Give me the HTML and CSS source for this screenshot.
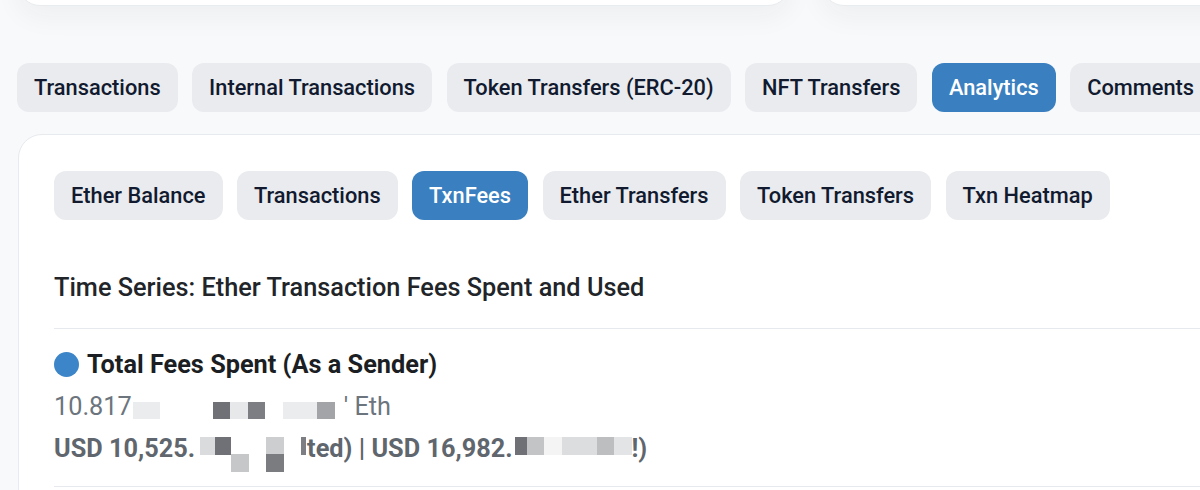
FILE: index.html
```html
<!DOCTYPE html>
<html lang="en">
<head>
<meta charset="utf-8">
<title>Address Analytics</title>
<link rel="stylesheet" href="styles.css">
</head>
<body>
<div class="page">
  <div class="top-cards">
    <div class="top-card"></div>
    <div class="top-card"></div>
  </div>

  <nav class="tabs">
    <a class="pill">Transactions</a>
    <a class="pill">Internal Transactions</a>
    <a class="pill">Token Transfers (ERC-20)</a>
    <a class="pill">NFT Transfers</a>
    <a class="pill active">Analytics</a>
    <a class="pill">Comments</a>
  </nav>

  <section class="card">
    <nav class="tabs">
      <a class="pill">Ether Balance</a>
      <a class="pill">Transactions</a>
      <a class="pill active">TxnFees</a>
      <a class="pill">Ether Transfers</a>
      <a class="pill">Token Transfers</a>
      <a class="pill">Txn Heatmap</a>
    </nav>

    <h2 class="heading">Time Series: Ether Transaction Fees Spent and Used</h2>

    <div class="stat">
      <div class="stat-title"><span class="dot"></span>Total Fees Spent (As a Sender)</div>
      <div class="stat-value">10.817<span class="m w1"></span><span class="m m-l w27"></span><span class="m w53"></span><span class="m m-d w17"></span><span class="m m-l2 w18"></span><span class="m m-d2 w17"></span><span class="m w18"></span><span class="m m-l w34"></span><span class="m m-g w18"></span><span class="m w9"></span>' Eth</div>
      <div class="stat-usd">USD 10,525.<span class="m w5"></span><span class="m m-f w15"></span><span class="m m-d w16"></span><span class="m2 m2-b w18"></span><span class="m w17"></span><span class="m2 m2-d w18"></span><span class="m w17"></span><span class="m m-d2 w5"></span><span class="m w1"></span>ted) | USD 16,982.<span class="m w2"></span><span class="m m-d w12"></span><span class="m m-c w17"></span><span class="m m-vl w18"></span><span class="m m-l3 w35"></span><span class="m m-c2 w17"></span><span class="m m-l4 w18"></span>!)</div>
    </div>
  </section>
</div>
</body>
</html>
```

FILE: styles.css
```css
html, body {
  margin: 0;
  padding: 0;
}

body {
  background: #f8f9fa;
  font-family: Roboto, "Liberation Sans", sans-serif;
  overflow: hidden;
  width: 1200px;
  height: 490px;
}

.page {
  width: 1576px;
  margin-left: 18px;
}

.top-cards {
  display: grid;
  grid-template-columns: 772px 772px;
  gap: 32px;
  margin-top: -45px;
}

.top-card {
  height: 49px;
  background: #ffffff;
  border: 1px solid #e9ecef;
  border-radius: 22px;
  box-shadow: 0 10px 28px rgba(30, 40, 60, 0.05);
}

.tabs {
  display: flex;
  gap: 14.5px;
  white-space: nowrap;
}

.page > .tabs {
  margin-top: 57px;
  margin-left: -1px;
}

.pill {
  display: block;
  padding: 8px 17px;
  font-size: 21.8px;
  line-height: 33px;
  font-weight: 500;
  color: #111a2e;
  background: #e9ebef;
  border-radius: 12px;
}

.pill.active {
  background: #3a80c0;
  color: #ffffff;
}

.card {
  margin-top: 22px;
  background: #ffffff;
  border: 1px solid #e7eaee;
  border-radius: 24px;
  padding: 36px 35px 0;
  height: 400px;
}

.heading {
  margin: 49px 0 0;
  padding-bottom: 21px;
  border-bottom: 1px solid #e6e9ed;
  font-size: 25.3px;
  line-height: 37.5px;
  font-weight: 500;
  color: #212529;
}

.stat {
  padding: 15px 0 14px;
  border-bottom: 1px solid #e6e9ed;
  font-size: 25.3px;
  line-height: 42px;
}

.stat-title {
  display: flex;
  align-items: center;
  gap: 8px;
  font-weight: 700;
  color: #1b1e22;
}

.dot {
  display: block;
  width: 25px;
  height: 25px;
  border-radius: 50%;
  background: #3c85c8;
}

.stat-value {
  color: #6c757d;
  white-space: nowrap;
}

.stat-usd {
  color: #5f666d;
  font-weight: 700;
  white-space: nowrap;
}

.m {
  display: inline-block;
  height: 17px;
  vertical-align: -4px;
}

.m2 {
  display: inline-block;
  height: 35px;
  vertical-align: -15px;
}

.stat-usd .m {
  height: 18px;
  vertical-align: 2px;
}

.m-l  { background: #ebecee; }
.m-l2 { background: #e7e8ea; }
.m-l3 { background: #dcdddf; }
.m-l4 { background: #e3e4e6; }
.m-vl { background: #f4f4f5; }
.m-d  { background: #707176; }
.m-d2 { background: #7c7e83; }
.m-g  { background: #a3a4a7; }
.m-c  { background: #c3c4c6; }
.m-c2 { background: #bdbec0; }
.m-f  { background: #dadbdd; }

.m2-b { background: linear-gradient(to bottom, transparent 50%, #c6c7c9 50%); }
.m2-d { background: linear-gradient(to bottom, #cdcecf 50%, #7b7c80 50%); }

.w1  { width: 1px; }
.w2  { width: 2px; }
.w5  { width: 5px; }
.w9  { width: 9px; }
.w12 { width: 12px; }
.w15 { width: 15px; }
.w16 { width: 16px; }
.w17 { width: 17px; }
.w18 { width: 18px; }
.w27 { width: 27px; }
.w34 { width: 34px; }
.w35 { width: 35px; }
.w53 { width: 53px; }
```
